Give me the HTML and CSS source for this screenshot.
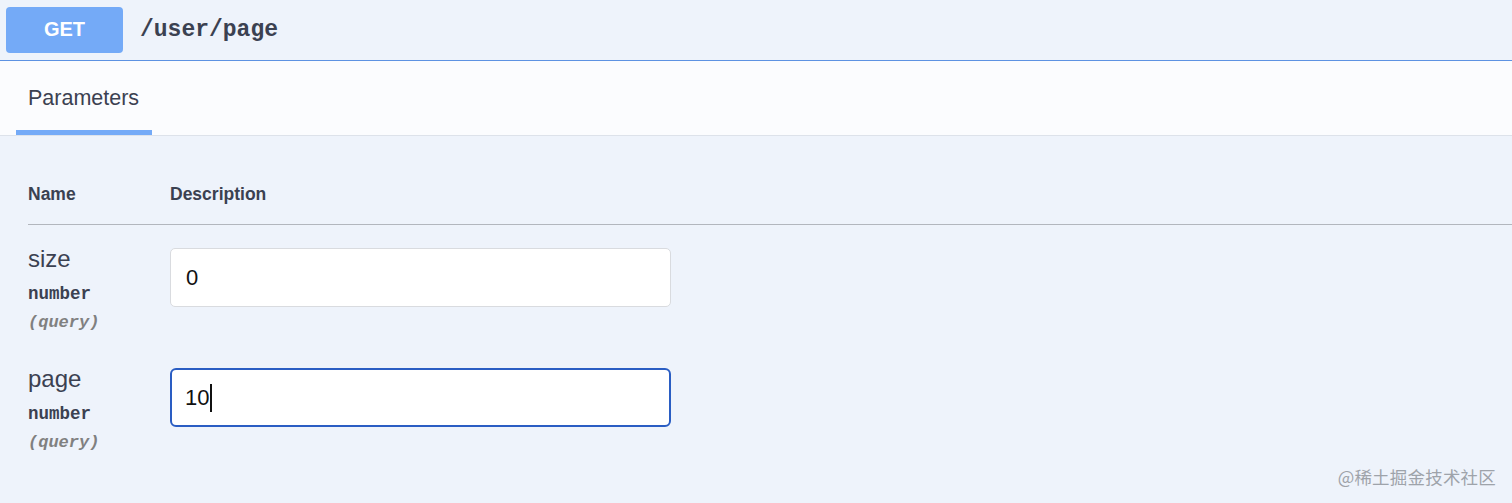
FILE: index.html
```html
<!DOCTYPE html>
<html>
<head>
<meta charset="utf-8">
<link rel="stylesheet" href="styles.css">
</head>
<body>
<div class="summary">
  <span class="method">GET</span>
  <span class="path">/user/page</span>
</div>
<div class="tabs">
  <div class="tab">Parameters</div>
</div>
<div class="params">
  <div class="head">
    <div class="col-name">Name</div>
    <div class="col-desc">Description</div>
  </div>
  <div class="row">
    <div class="col-name">
      <div class="pname">size</div>
      <div class="ptype">number</div>
      <div class="pin">(query)</div>
    </div>
    <div class="col-desc">
      <div class="input">0</div>
    </div>
  </div>
  <div class="row">
    <div class="col-name">
      <div class="pname">page</div>
      <div class="ptype">number</div>
      <div class="pin">(query)</div>
    </div>
    <div class="col-desc">
      <div class="input focus">10<span class="caret"></span></div>
    </div>
  </div>
</div>
<div class="watermark">@稀土掘金技术社区</div>
</body>
</html>
```
FILE: styles.css
```css
html, body {
  margin: 0;
  padding: 0;
}
body {
  background: #eef3fb;
  font-family: "Liberation Sans", Arial, sans-serif;
  color: #3b4151;
  width: 1512px;
  height: 503px;
  overflow: hidden;
  position: relative;
}
.summary {
  height: 61px;
  box-sizing: border-box;
  padding: 5px 6px 6px;
  display: flex;
  align-items: center;
  border-bottom: 1px solid #5d92e2;
}
.method {
  width: 117px;
  height: 46px;
  border-radius: 4px;
  background: #74aaf7;
  color: #fff;
  font-weight: bold;
  font-size: 20px;
  display: flex;
  align-items: center;
  justify-content: center;
}
.path {
  margin-left: 17px;
  font-family: "Liberation Mono", "Courier New", monospace;
  font-weight: bold;
  font-size: 23px;
  color: #3b4151;
}
.tabs {
  height: 74px;
  background: #fbfcfe;
  border-bottom: 1px solid #dde2ea;
  padding-left: 16px;
  display: flex;
}
.tab {
  width: 136px;
  box-sizing: border-box;
  padding-left: 12px;
  font-size: 21.5px;
  display: flex;
  align-items: center;
  border-bottom: 5px solid #74aaf7;
  padding-top: 6px;
}
.params {
  padding-left: 28px;
}
.head {
  display: flex;
  height: 89px;
  box-sizing: border-box;
  align-items: flex-end;
  padding-bottom: 19px;
  border-bottom: 1.5px solid #b2b6bd;
  font-weight: bold;
  font-size: 17.5px;
}
.col-name {
  width: 142px;
}
.row {
  display: flex;
  padding-top: 23px;
  height: 97px;
}
.pname {
  font-size: 24px;
  line-height: 24px;
  margin-top: -1px;
}
.ptype {
  font-family: "Liberation Mono", "Courier New", monospace;
  font-weight: bold;
  font-size: 17.5px;
  margin-top: 13px;
  line-height: 20px;
}
.pin {
  font-family: "Liberation Mono", "Courier New", monospace;
  font-weight: bold;
  font-style: italic;
  font-size: 17px;
  color: #808080;
  margin-top: 9px;
  line-height: 20px;
}
.input {
  width: 501px;
  height: 59px;
  box-sizing: border-box;
  background: #fff;
  border: 1px solid #d9dbdf;
  border-radius: 5px;
  padding-left: 15px;
  display: flex;
  align-items: center;
  font-size: 22px;
  color: #111;
}
.input.focus {
  border: 2.5px solid #2a5dc3;
  border-radius: 6px;
  padding-left: 13px;
}
.caret {
  display: inline-block;
  width: 1.5px;
  height: 28px;
  background: #111;
  margin-left: 1px;
}
.watermark {
  position: absolute;
  right: 16px;
  bottom: 14px;
  font-family: "Noto Sans CJK SC", sans-serif;
  font-size: 17.5px;
  color: #9ea3aa;
  letter-spacing: 0.2px;
}
```
